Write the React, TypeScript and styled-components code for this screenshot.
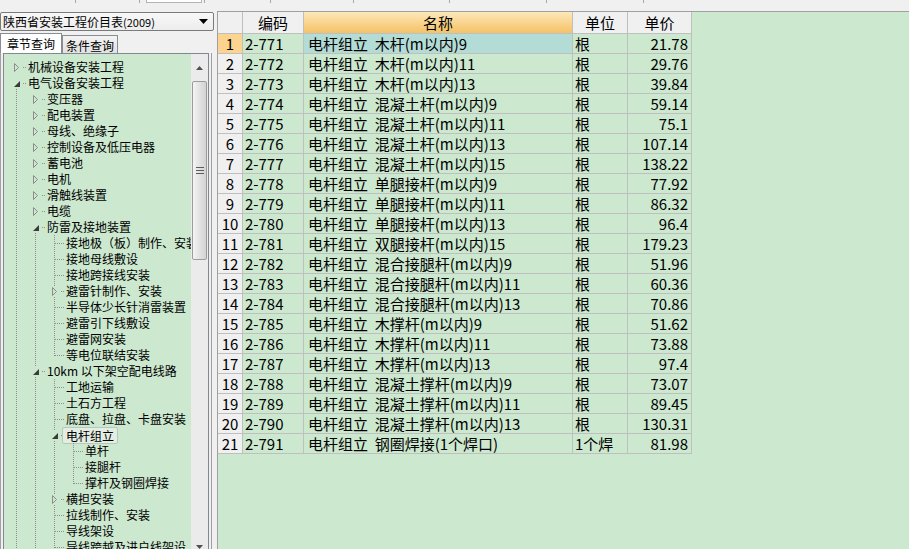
import React from 'react';
import styled, { createGlobalStyle, css } from 'styled-components';

const GREEN = '#cce8cf';
const CJK = '"Noto Sans CJK SC", "Noto Sans", sans-serif';
const LINE = '#bfbfbf';

const Global = createGlobalStyle`
  html, body { margin: 0; padding: 0; background: #f0f0f0; overflow: hidden; }
  body { font-family: ${CJK}; color: #000; }
  #root { width: 909px; height: 549px; overflow: hidden; }
`;

const Frame = styled.div`
  width: 909px;
  height: 549px;
  display: flex;
  flex-direction: column;
  overflow: hidden;
  background: #f0f0f0;
`;

const Toolbar = styled.div`
  height: 11px;
  flex: none;
  display: flex;
`;

const ToolStub = styled.div<{ $w: number }>`
  width: ${p => p.$w}px;
  height: 3px;
  box-sizing: border-box;
  border-right: 1px solid #a8a8a8;
  display: flex;
`;

const PressedStub = styled.div`
  margin-left: 6px;
  width: 54px;
  height: 2px;
  background: #fff;
  border: 1px solid #b4b4b4;
  border-top: none;
`;

const Main = styled.div`
  flex: 1;
  min-height: 0;
  display: flex;
`;

const LeftPanel = styled.div`
  width: 212px;
  flex: none;
  display: flex;
  flex-direction: column;
`;

const Combo = styled.div`
  margin-top: 1px;
  width: 214px;
  height: 19px;
  flex: none;
  box-sizing: border-box;
  border: 1px solid #7a7a7a;
  border-radius: 2px;
  background: linear-gradient(#f8f8f8, #ededed);
  display: flex;
  align-items: center;
  justify-content: space-between;
  padding: 0 5px 0 2px;
  font-size: 12px;
  line-height: 17px;
  white-space: nowrap;
  position: relative;
  z-index: 1;
`;

const ComboYear = styled.span`
  font-size: 11px;
`;

const TabStrip = styled.div`
  margin-top: 2px;
  height: 20px;
  flex: none;
  display: flex;
  align-items: flex-end;
`;

const Tab = styled.div<{ $active?: boolean }>`
  box-sizing: border-box;
  border: 1px solid #898c95;
  border-bottom: none;
  font-size: 12px;
  display: flex;
  align-items: center;
  justify-content: center;
  white-space: nowrap;
  ${p =>
    p.$active
      ? css`
          width: 62px;
          height: 20px;
          background: #fff;
          line-height: 18px;
        `
      : css`
          width: 56px;
          height: 18px;
          background: linear-gradient(#f3f3f3, #e2e2e2);
          line-height: 16px;
          padding-top: 2px;
        `}
`;

const TabPage = styled.div`
  flex: 1;
  min-height: 0;
  box-sizing: border-box;
  border-left: 1px solid #a0a0a0;
  border-right: 1px solid #a0a0a0;
  padding: 0 2px;
`;

const TreeBox = styled.div`
  height: 503px;
  box-sizing: border-box;
  border: 1px solid #828790;
  background: ${GREEN};
  display: flex;
  overflow: hidden;
`;

const TreeContent = styled.div`
  flex: 1;
  min-width: 0;
  padding-top: 5px;
  overflow: hidden;
`;

const TreeRow = styled.div`
  height: 16px;
  display: flex;
  align-items: center;
  padding-left: 3px;
  white-space: nowrap;
`;

const GuideSvg = styled.svg`
  display: block;
  flex: none;
`;

const Label = styled.span<{ $sel?: boolean }>`
  font-size: 12px;
  line-height: 16px;
  margin-left: 2px;
  white-space: nowrap;
  ${p =>
    p.$sel &&
    css`
      margin-left: -2px;
      padding: 0 3px;
      height: 17px;
      line-height: 15px;
      box-sizing: border-box;
      border: 1px solid #b7c7b9;
      border-radius: 2px;
      background: #e3ede4;
    `}
`;

const ScrollBar = styled.div`
  width: 17px;
  flex: none;
  background: #ebebeb;
  display: flex;
  flex-direction: column;
`;

const ScrollBtn = styled.div<{ $top?: boolean }>`
  flex: none;
  display: flex;
  justify-content: center;
  ${p =>
    p.$top
      ? css`
          height: 27px;
          align-items: flex-start;
          padding-top: 12px;
          box-sizing: border-box;
        `
      : css`
          height: 17px;
          align-items: center;
        `}
`;

const Thumb = styled.div`
  flex: none;
  height: 179px;
  margin: 0 1px;
  box-sizing: border-box;
  border: 1px solid #9c9c9c;
  border-radius: 2px;
  background: linear-gradient(to right, #f4f4f4, #e4e4e4 45%, #d3d3d3);
  display: flex;
  align-items: center;
  justify-content: center;
`;

const Track = styled.div`
  flex: 1;
`;

const Splitter = styled.div`
  width: 5px;
  flex: none;
`;

const GridArea = styled.div`
  flex: 1;
  min-width: 0;
  background: ${GREEN};
  border-top: 1px solid #a0a0a0;
  border-left: 1px solid #a0a0a0;
  overflow: hidden;
`;

const Table = styled.div`
  display: grid;
  grid-template-columns: 25px 61px 269px 55px 64px;
  grid-template-rows: 22px;
  grid-auto-rows: 20px;
  width: max-content;
`;

type Kind = 'num' | 'code' | 'name' | 'unit' | 'price';

const Cell = styled.div<{ $kind: Kind; $head?: boolean; $hot?: boolean; $sel?: boolean }>`
  box-sizing: border-box;
  border-right: 1px solid ${LINE};
  border-bottom: 1px solid ${LINE};
  font-size: 15px;
  line-height: 19px;
  white-space: pre;
  overflow: hidden;
  display: flex;
  align-items: center;
  background: ${GREEN};
  ${p => p.$kind === 'num' && css`justify-content: center; background: #f0f0f0;`}
  ${p => p.$kind === 'code' && css`padding-left: 2px;`}
  ${p => p.$kind === 'name' && css`padding-left: 4px;`}
  ${p => p.$kind === 'unit' && css`padding-left: 2px;`}
  ${p => p.$kind === 'price' && css`justify-content: flex-end; padding-right: 3px;`}
  ${p => p.$head && css`justify-content: center; padding: 0; background: #f0f0f0;`}
  ${p => p.$hot && p.$head && css`background: linear-gradient(#fde8b9, #f4c267);`}
  ${p => p.$hot && !p.$head && css`background: #fdd48f;`}
  ${p => p.$sel && css`background: #b4dcd6;`}
`;

type Guide = 'n' | 'v' | 'T' | 'L' | 'h' | 'b';
type Exp = 'open' | 'closed' | undefined;

interface TreeItem {
  label: string;
  g: Guide[];
  exp?: Exp;
  sel?: boolean;
}

const V: Guide = 'v';

const tree: TreeItem[] = [
  { label: '机械设备安装工程', g: ['h'], exp: 'closed' },
  { label: '电气设备安装工程', g: ['b'], exp: 'open' },
  { label: '变压器', g: [V, 'h'], exp: 'closed' },
  { label: '配电装置', g: [V, 'h'], exp: 'closed' },
  { label: '母线、绝缘子', g: [V, 'h'], exp: 'closed' },
  { label: '控制设备及低压电器', g: [V, 'h'], exp: 'closed' },
  { label: '蓄电池', g: [V, 'h'], exp: 'closed' },
  { label: '电机', g: [V, 'h'], exp: 'closed' },
  { label: '滑触线装置', g: [V, 'h'], exp: 'closed' },
  { label: '电缆', g: [V, 'h'], exp: 'closed' },
  { label: '防雷及接地装置', g: [V, 'b'], exp: 'open' },
  { label: '接地极（板）制作、安装', g: [V, V, 'T'] },
  { label: '接地母线敷设', g: [V, V, 'T'] },
  { label: '接地跨接线安装', g: [V, V, 'T'] },
  { label: '避雷针制作、安装', g: [V, V, 'T'], exp: 'closed' },
  { label: '半导体少长针消雷装置', g: [V, V, 'T'] },
  { label: '避雷引下线敷设', g: [V, V, 'T'] },
  { label: '避雷网安装', g: [V, V, 'T'] },
  { label: '等电位联结安装', g: [V, V, 'L'] },
  { label: '10km 以下架空配电线路', g: [V, 'T'], exp: 'open' },
  { label: '工地运输', g: [V, V, 'T'] },
  { label: '土石方工程', g: [V, V, 'T'] },
  { label: '底盘、拉盘、卡盘安装', g: [V, V, 'T'] },
  { label: '电杆组立', g: [V, V, 'T'], exp: 'open', sel: true },
  { label: '单杆', g: [V, V, V, 'T'] },
  { label: '接腿杆', g: [V, V, V, 'T'] },
  { label: '撑杆及钢圈焊接', g: [V, V, V, 'L'] },
  { label: '横担安装', g: [V, V, 'T'], exp: 'closed' },
  { label: '拉线制作、安装', g: [V, V, 'T'] },
  { label: '导线架设', g: [V, V, 'T'] },
  { label: '导线跨越及进户线架设', g: [V, V, 'T'] },
];

const rows: [string, string, string, string][] = [
  ['2-771', '木杆(m以内)9', '根', '21.78'],
  ['2-772', '木杆(m以内)11', '根', '29.76'],
  ['2-773', '木杆(m以内)13', '根', '39.84'],
  ['2-774', '混凝土杆(m以内)9', '根', '59.14'],
  ['2-775', '混凝土杆(m以内)11', '根', '75.1'],
  ['2-776', '混凝土杆(m以内)13', '根', '107.14'],
  ['2-777', '混凝土杆(m以内)15', '根', '138.22'],
  ['2-778', '单腿接杆(m以内)9', '根', '77.92'],
  ['2-779', '单腿接杆(m以内)11', '根', '86.32'],
  ['2-780', '单腿接杆(m以内)13', '根', '96.4'],
  ['2-781', '双腿接杆(m以内)15', '根', '179.23'],
  ['2-782', '混合接腿杆(m以内)9', '根', '51.96'],
  ['2-783', '混合接腿杆(m以内)11', '根', '60.36'],
  ['2-784', '混合接腿杆(m以内)13', '根', '70.86'],
  ['2-785', '木撑杆(m以内)9', '根', '51.62'],
  ['2-786', '木撑杆(m以内)11', '根', '73.88'],
  ['2-787', '木撑杆(m以内)13', '根', '97.4'],
  ['2-788', '混凝土撑杆(m以内)9', '根', '73.07'],
  ['2-789', '混凝土撑杆(m以内)11', '根', '89.45'],
  ['2-790', '混凝土撑杆(m以内)13', '根', '130.31'],
  ['2-791', '钢圈焊接(1个焊口)', '1个焊', '81.98'],
];

const toolSegments = [76, 64, 65, 66, 83, 96, 97, 97];

function GuideCell({ g, exp }: { g: Guide; exp?: Exp }) {
  const line = { stroke: '#8e8e8e', strokeWidth: 1, strokeDasharray: '1 1' };
  return (
    <GuideSvg width={19} height={16} viewBox="0 0 19 16">
      {(g === 'v' || g === 'T') && <line x1={9.5} y1={0} x2={9.5} y2={16} {...line} />}
      {g === 'L' && <line x1={9.5} y1={0} x2={9.5} y2={9} {...line} />}
      {g === 'b' && <line x1={9.5} y1={8} x2={9.5} y2={16} {...line} />}
      {(g === 'T' || g === 'L' || g === 'h' || g === 'b') && (
        <line x1={10} y1={8.5} x2={19} y2={8.5} {...line} />
      )}
      {exp && <rect x={4} y={3} width={11} height={11} fill={GREEN} />}
      {exp === 'closed' && (
        <polygon points="7.5,4.5 11.5,8.5 7.5,12.5" fill="none" stroke="#8c8c8c" strokeWidth={1} />
      )}
      {exp === 'open' && <polygon points="13,6 13,12 7,12" fill="#3a3a3a" />}
    </GuideSvg>
  );
}

function TreeLine({ item }: { item: TreeItem }) {
  const last = item.g.length - 1;
  return (
    <TreeRow>
      {item.g.map((g, i) => (
        <GuideCell key={i} g={g} exp={i === last ? item.exp : undefined} />
      ))}
      <Label $sel={item.sel}>{item.label}</Label>
    </TreeRow>
  );
}

const Arrow = ({ up }: { up?: boolean }) => (
  <svg width={7} height={4} viewBox="0 0 7 4" style={{ display: 'block' }}>
    <polygon points={up ? '0,4 7,4 3.5,0' : '0,0 7,0 3.5,4'} fill="#505050" />
  </svg>
);

const Grip = () => (
  <svg width={8} height={7} viewBox="0 0 8 7" style={{ display: 'block' }}>
    {[0, 3, 6].map(y => (
      <rect key={y} x={0} y={y} width={8} height={1} fill="#5c5c5c" />
    ))}
  </svg>
);

export default function App() {
  return (
    <Frame>
      <Global />
      <Toolbar>
        {toolSegments.map((w, i) => (
          <ToolStub key={i} $w={w}>
            {i === 2 && <PressedStub />}
          </ToolStub>
        ))}
      </Toolbar>
      <Main>
        <LeftPanel>
          <Combo>
            <span>
              陕西省安装工程价目表<ComboYear>(2009)</ComboYear>
            </span>
            <svg width={9} height={5} viewBox="0 0 9 5" style={{ display: 'block' }}>
              <polygon points="0,0 9,0 4.5,5" fill="#000" />
            </svg>
          </Combo>
          <TabStrip>
            <Tab $active>章节查询</Tab>
            <Tab>条件查询</Tab>
          </TabStrip>
          <TabPage>
            <TreeBox>
              <TreeContent>
                {tree.map((item, i) => (
                  <TreeLine key={i} item={item} />
                ))}
              </TreeContent>
              <ScrollBar>
                <ScrollBtn $top>
                  <Arrow up />
                </ScrollBtn>
                <Thumb>
                  <Grip />
                </Thumb>
                <Track />
                <ScrollBtn>
                  <Arrow />
                </ScrollBtn>
              </ScrollBar>
            </TreeBox>
          </TabPage>
        </LeftPanel>
        <Splitter />
        <GridArea>
          <Table>
            <Cell $kind="num" $head />
            <Cell $kind="code" $head>编码</Cell>
            <Cell $kind="name" $head $hot>名称</Cell>
            <Cell $kind="unit" $head>单位</Cell>
            <Cell $kind="price" $head>单价</Cell>
            {rows.map(([code, name, unit, price], i) => (
              <React.Fragment key={code}>
                <Cell $kind="num" $hot={i === 0}>{i + 1}</Cell>
                <Cell $kind="code">{code}</Cell>
                <Cell $kind="name" $sel={i === 0}>{'电杆组立  ' + name}</Cell>
                <Cell $kind="unit">{unit}</Cell>
                <Cell $kind="price">{price}</Cell>
              </React.Fragment>
            ))}
          </Table>
        </GridArea>
      </Main>
    </Frame>
  );
}
